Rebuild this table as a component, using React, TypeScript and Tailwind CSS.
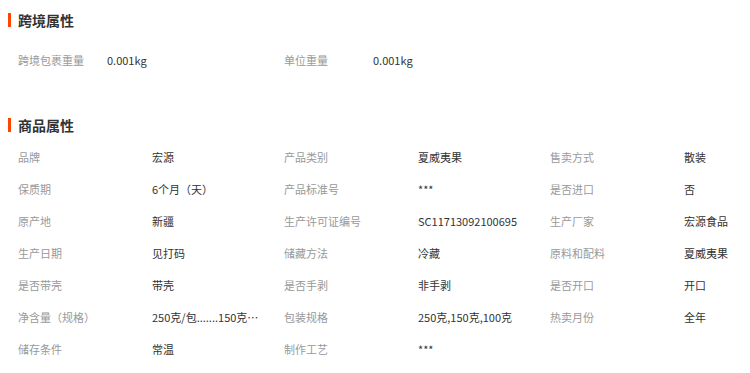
const font = { fontFamily: '"Noto Sans CJK SC", "Liberation Sans", sans-serif' };

const crossBorder = [
  ["跨境包裹重量", "0.001kg"],
  ["单位重量", "0.001kg"],
];

const attrs = [
  ["品牌", "宏源"],
  ["产品类别", "夏威夷果"],
  ["售卖方式", "散装"],
  ["保质期", "6个月（天）"],
  ["产品标准号", "***"],
  ["是否进口", "否"],
  ["原产地", "新疆"],
  ["生产许可证编号", "SC11713092100695"],
  ["生产厂家", "宏源食品"],
  ["生产日期", "见打码"],
  ["储藏方法", "冷藏"],
  ["原料和配料", "夏威夷果"],
  ["是否带壳", "带壳"],
  ["是否手剥", "非手剥"],
  ["是否开口", "开口"],
  ["净含量（规格）", "250克/包.......150克/包.......100克/包"],
  ["包装规格", "250克,150克,100克"],
  ["热卖月份", "全年"],
  ["储存条件", "常温"],
  ["制作工艺", "***"],
];

function Title({ text }: { text: string }) {
  return (
    <div className="flex items-center h-8 pl-2">
      <span className="w-[3px] h-[14px] bg-[#ff4400] mr-[7px]" />
      <h2 className="text-[14px] font-bold text-[#333]">{text}</h2>
    </div>
  );
}

function Cell({ label, value, labelW }: { label: string; value: string; labelW: string }) {
  return (
    <div className="flex items-center h-8 text-[11px] w-[266px]">
      <span className={`${labelW} shrink-0 text-[#999]`}>{label}</span>
      <span className="w-[108px] truncate text-[#333]">{value}</span>
    </div>
  );
}

export default function App() {
  return (
    <div className="bg-white w-[750px] h-[373px] overflow-hidden pt-1" style={font}>
      <Title text="跨境属性" />
      <div className="flex mt-2 pl-[18px]">
        {crossBorder.map(([l, v]) => (
          <Cell key={l} label={l} value={v} labelW="w-[89px]" />
        ))}
      </div>
      <div className="mt-[33px]">
        <Title text="商品属性" />
      </div>
      <div className="grid grid-cols-[266px_266px_200px] pl-[18px]">
        {attrs.map(([l, v]) => (
          <Cell key={l} label={l} value={v} labelW="w-[134px]" />
        ))}
      </div>
    </div>
  );
}
